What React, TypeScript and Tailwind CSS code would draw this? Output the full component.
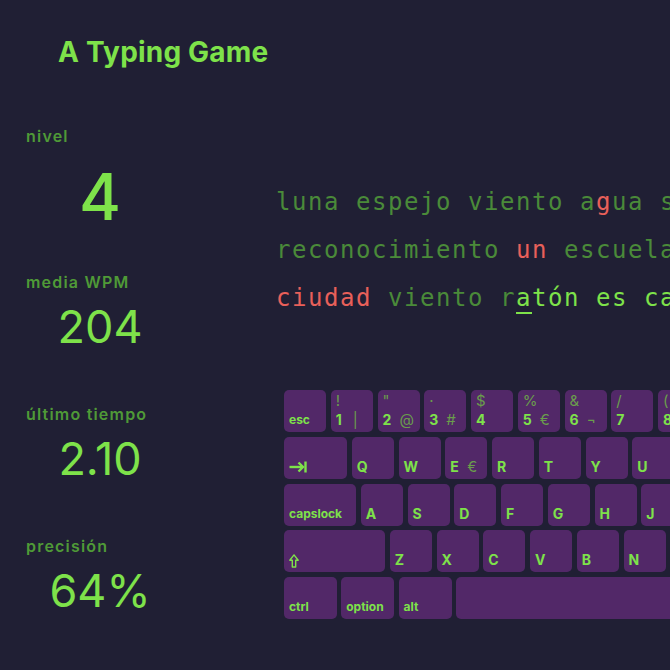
import React from "react";

type KeyDef = {
  main?: string;
  top?: string;
  side?: string;
  word?: boolean;
  icon?: "tab" | "shift";
  w?: string;
};

const rows: KeyDef[][] = [
  [
    { main: "esc", word: true },
    { main: "1", top: "!", side: "|" },
    { main: "2", top: "\"", side: "@" },
    { main: "3", top: "·", side: "#" },
    { main: "4", top: "$" },
    { main: "5", top: "%", side: "€" },
    { main: "6", top: "&", side: "¬" },
    { main: "7", top: "/" },
    { main: "8", top: "(" },
    { main: "9", top: ")" },
  ],
  [
    { icon: "tab", w: "w-[63px]" },
    { main: "Q" },
    { main: "W" },
    { main: "E", side: "€" },
    { main: "R" },
    { main: "T" },
    { main: "Y" },
    { main: "U" },
    { main: "I" },
    { main: "O" },
  ],
  [
    { main: "capslock", word: true, w: "w-[72px]" },
    { main: "A" },
    { main: "S" },
    { main: "D" },
    { main: "F" },
    { main: "G" },
    { main: "H" },
    { main: "J" },
    { main: "K" },
  ],
  [
    { icon: "shift", w: "w-[101px]" },
    { main: "Z" },
    { main: "X" },
    { main: "C" },
    { main: "V" },
    { main: "B" },
    { main: "N" },
    { main: "M" },
  ],
  [
    { main: "ctrl", word: true, w: "w-[52.5px]" },
    { main: "option", word: true, w: "w-[52.5px]" },
    { main: "alt", word: true, w: "w-[53px]" },
    { w: "w-[300px]" },
  ],
];

const stats = [
  { label: "nivel", value: "4" },
  { label: "media WPM", value: "204" },
  { label: "último tiempo", value: "2.10" },
  { label: "precisión", value: "64%" },
];

const TabIcon = () => (
  <svg width="18" height="12" viewBox="0 0 18 12" fill="none" stroke="#7ee24a" strokeWidth="2.4">
    <path d="M0.5 6 H14" />
    <path d="M9.5 1.5 L14 6 L9.5 10.5" strokeLinejoin="miter" />
    <path d="M16.5 0.5 V11.5" />
  </svg>
);

const ShiftIcon = () => (
  <svg width="10" height="14" viewBox="0 0 10 14" fill="none" stroke="#7ee24a" strokeWidth="1.4">
    <path d="M5 0.9 L9.2 6.3 H6.7 V13 H3.3 V6.3 H0.8 Z" strokeLinejoin="round" />
  </svg>
);

const Key = ({ k }: { k: KeyDef }) => (
  <div
    className={`${k.w ?? "w-[42px]"} h-[42px] shrink-0 rounded-[5px] bg-[#522868] px-[5px] pt-[3px] pb-[5px] flex flex-col justify-between`}
  >
    <div className="h-[16px] text-[15px] leading-[16px] text-[#6a9d4c]">{k.top}</div>
    {k.icon === "tab" && (
      <div className="pb-[1px]">
        <TabIcon />
      </div>
    )}
    {k.icon === "shift" && (
      <div className="-mb-[1px]">
        <ShiftIcon />
      </div>
    )}
    {k.main && (
      <div className="flex items-baseline">
        <span
          className={
            k.word
              ? "text-[12px] leading-[14px] font-bold text-[#7ee24a]"
              : "w-[17px] text-[14px] leading-[14px] font-bold text-[#7ee24a]"
          }
        >
          {k.main}
        </span>
        {k.side && (
          <span className="text-[15px] leading-[14px] text-[#6a9d4c]">{k.side}</span>
        )}
      </div>
    )}
  </div>
);

const dim = "text-[#4a8a39]";
const bad = "text-[#e8605a]";
const next = "text-[#7ee24a]";

const App = () => {
  return (
    <div className="h-[670px] w-full overflow-hidden bg-[#201f34] font-['Inter',sans-serif]">
      {/* Header */}
      <header className="pt-[36px] pl-[58px]">
        <h1 className="text-[28px] leading-[32px] font-bold tracking-[0.2px] text-[#7ee24a]">
          A Typing Game
        </h1>
      </header>

      <div className="flex mt-[58px]">
        {/* Stats */}
        <aside className="w-[200px] shrink-0 flex flex-col">
          {stats.map((s, i) => (
            <div key={i} className={i === 0 ? "" : i === 1 ? "mt-[43px]" : "mt-[52px]"}>
              <div className="pl-[26px] text-[16px] leading-[20px] font-semibold tracking-[1.2px] text-[#4f9a37]">
                {s.label}
              </div>
              {i === 0 ? (
                <div className="mt-[19px] text-center text-[64px] leading-[64px] font-medium text-[#7ee24a]">
                  {s.value}
                </div>
              ) : (
                <div className="mt-[10px] text-center text-[45px] leading-[50px] text-[#7ee24a]">
                  {s.value}
                </div>
              )}
            </div>
          ))}
        </aside>

        {/* Words + keyboard */}
        <main className="flex-1 min-w-0 pl-[76px] pt-[52px]">
          <div className="font-['DejaVu_Sans_Mono',monospace] text-[24px] leading-[48px] tracking-[1.55px] whitespace-nowrap">
            <div>
              <span className={dim}>luna espejo viento a</span>
              <span className={bad}>g</span>
              <span className={dim}>ua sol casa perro</span>
            </div>
            <div>
              <span className={dim}>reconocimiento </span>
              <span className={bad}>un</span>
              <span className={dim}> escuela libro noche</span>
            </div>
            <div>
              <span className={bad}>ciudad</span>
              <span className={dim}> viento r</span>
              <span className={`${next} border-b-2 border-[#7ee24a]`}>a</span>
              <span className={next}>tón es camino verde</span>
            </div>
          </div>

          {/* Keyboard */}
          <div className="mt-[68px] ml-[8px] flex flex-col gap-[4.75px]">
            {rows.map((row, r) => (
              <div key={r} className="flex gap-[4.75px]">
                {row.map((k, i) => (
                  <Key key={i} k={k} />
                ))}
              </div>
            ))}
          </div>
        </main>
      </div>
    </div>
  );
};

export default App;
